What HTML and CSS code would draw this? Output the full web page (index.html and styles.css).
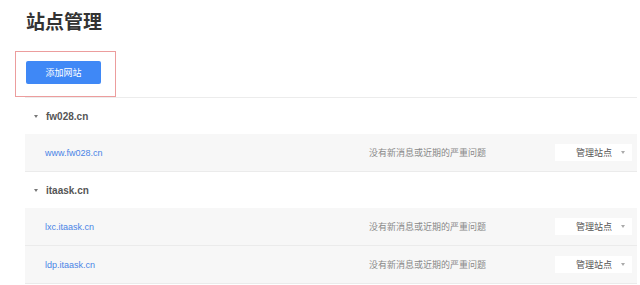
FILE: index.html
```html
<!DOCTYPE html>
<html lang="zh-CN">
<head>
<meta charset="utf-8">
<title>站点管理</title>
<link rel="stylesheet" href="styles.css">
</head>
<body>
<div class="page">
  <h1 class="title">站点管理</h1>
  <div class="toolbar">
    <button class="btn-primary" type="button">添加网站</button>
  </div>
  <div class="site-list">
    <div class="group-head"><span class="caret"></span><span class="group-name">fw028.cn</span></div>
    <div class="site-row">
      <a class="site-link" href="#">www.fw028.cn</a>
      <span class="site-status">没有新消息或近期的严重问题</span>
      <div class="manage"><span class="manage-label">管理站点</span><span class="manage-caret"></span></div>
    </div>
    <div class="group-head"><span class="caret"></span><span class="group-name">itaask.cn</span></div>
    <div class="site-row">
      <a class="site-link" href="#">lxc.itaask.cn</a>
      <span class="site-status">没有新消息或近期的严重问题</span>
      <div class="manage"><span class="manage-label">管理站点</span><span class="manage-caret"></span></div>
    </div>
    <div class="site-row">
      <a class="site-link" href="#">ldp.itaask.cn</a>
      <span class="site-status">没有新消息或近期的严重问题</span>
      <div class="manage"><span class="manage-label">管理站点</span><span class="manage-caret"></span></div>
    </div>
  </div>
</div>
</body>
</html>
```
FILE: styles.css
```css
html, body {
  margin: 0;
  padding: 0;
  background: #ffffff;
}
body {
  font-family: "Liberation Sans", "Noto Sans CJK SC", sans-serif;
  color: #555;
}
.page {
  padding: 0 3px 0 25px;
}
.title {
  margin: 0 0 0 1px;
  padding-top: 9px;
  font-size: 19px;
  line-height: 24px;
  font-weight: bold;
  color: #333;
  font-family: "Noto Sans CJK SC", sans-serif;
}
.toolbar {
  margin: 18px 0 0 -10px;
  width: 101px;
  height: 46px;
  border: 1px solid #ec9d9d;
  padding: 9px 0 0 10px;
  box-sizing: border-box;
}
.btn-primary {
  display: block;
  width: 75px;
  height: 23px;
  border: 0;
  border-radius: 2px;
  background: #3f88f6;
  color: #fff;
  font-family: "Noto Sans CJK SC", sans-serif;
  font-size: 9px;
  line-height: 23px;
  padding: 0;
  margin: 0;
}
.site-list {
  border-top: 1px solid #ececec;
  margin-top: 0;
}
.group-head {
  height: 36px;
  display: flex;
  align-items: center;
  padding-left: 9px;
}
.caret {
  width: 0;
  height: 0;
  border-left: 2.5px solid transparent;
  border-right: 2.5px solid transparent;
  border-top: 3px solid #777;
  margin-right: 8px;
}
.group-name {
  font-size: 10px;
  font-weight: bold;
  color: #555;
}
.site-row {
  height: 37px;
  background: #f7f7f7;
  border-bottom: 1px solid #ebebeb;
  display: grid;
  grid-template-columns: 1fr 186px 77px;
  align-items: center;
  padding: 0 5px 0 20px;
}
.site-link {
  font-size: 9px;
  color: #4a84e6;
  text-decoration: none;
}
.site-status {
  font-size: 9px;
  color: #888;
}
.manage {
  height: 17px;
  background: #fff;
  display: flex;
  align-items: center;
  justify-content: flex-end;
  padding-right: 7px;
}
.manage-label {
  font-size: 9px;
  color: #555;
  margin-right: 9px;
}
.manage-caret {
  width: 0;
  height: 0;
  border-left: 2.5px solid transparent;
  border-right: 2.5px solid transparent;
  border-top: 3px solid #aaa;
}
```
